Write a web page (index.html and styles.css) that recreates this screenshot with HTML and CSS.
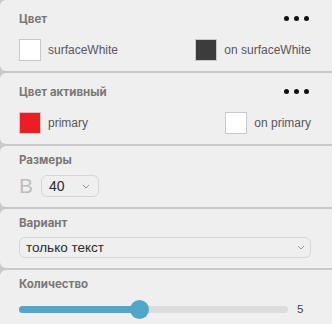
FILE: index.html
```html
<!DOCTYPE html>
<html>
<head>
    <title>Properties</title>
    <link rel="stylesheet" href="styles.css">
</head>
<body>
    <div class="panel">
        <div class="section">
            <div class="head head-menu">
                <span class="title">Цвет</span>
                <span class="dots"><i></i><i></i><i></i></span>
            </div>
            <div class="pair">
                <span class="item"><span class="swatch white"></span><span class="label">surfaceWhite</span></span>
                <span class="item"><span class="swatch dark"></span><span class="label">on surfaceWhite</span></span>
            </div>
        </div>
        <div class="section">
            <div class="head head-menu">
                <span class="title">Цвет активный</span>
                <span class="dots"><i></i><i></i><i></i></span>
            </div>
            <div class="pair">
                <span class="item"><span class="swatch red"></span><span class="label">primary</span></span>
                <span class="item"><span class="swatch white"></span><span class="label">on primary</span></span>
            </div>
        </div>
        <div class="section">
            <div class="head"><span class="title">Размеры</span></div>
            <div class="size-row">
                <span class="big-b">B</span>
                <div class="dropdown small">
                    <span>40</span>
                    <svg class="chev" width="8" height="5" viewBox="0 0 8 5"><path d="M1 1l3 3 3-3" fill="none" stroke="#999" stroke-width="1"/></svg>
                </div>
            </div>
        </div>
        <div class="section">
            <div class="head"><span class="title">Вариант</span></div>
            <div class="dropdown wide">
                <span>только текст</span>
                <svg class="chev" width="8" height="5" viewBox="0 0 8 5"><path d="M1 1l3 3 3-3" fill="none" stroke="#999" stroke-width="1"/></svg>
            </div>
        </div>
        <div class="section last">
            <div class="head"><span class="title">Количество</span></div>
            <div class="slider-row">
                <div class="track">
                    <div class="fill" style="width: 120px;"></div>
                    <div class="thumb" style="left: 111px;"></div>
                </div>
                <span class="value">5</span>
            </div>
        </div>
    </div>
</body>
</html>
```

FILE: styles.css
```css
body
{
    margin: 0;
    background-color: #c9c9c9;
    font-family: "Liberation Sans", Arial, sans-serif;
}
.panel
{
    display: flex;
    flex-direction: column;
    gap: 2px;
    width: 340px;
    height: 324px;
    overflow: hidden;
}
.section
{
    background-color: #efefef;
    border-radius: 6px;
    padding: 7px 29px 10px 19px;
}
.section.last
{
    flex: 1;
}
.head
{
    display: flex;
    align-items: center;
    justify-content: space-between;
    height: 14px;
}
.head-menu
{
    height: 24px;
    margin-bottom: 8px;
}
.title
{
    font-family: Inter, "Liberation Sans", sans-serif;
    font-weight: 700;
    font-size: 11.5px;
    color: #7a7676;
}
.dots
{
    display: flex;
    gap: 5px;
    margin-right: 2px;
    margin-top: -2px;
}
.dots i
{
    width: 5px;
    height: 5px;
    border-radius: 50%;
    background-color: #111;
}
.pair
{
    display: flex;
    justify-content: space-between;
    align-items: center;
    height: 22px;
}
.item
{
    display: flex;
    align-items: center;
}
.swatch
{
    width: 20px;
    height: 20px;
    border: 1px solid #c8c8c8;
    margin-right: 7px;
}
.swatch.white
{
    background-color: #fff;
}
.swatch.dark
{
    background-color: #3c3c3c;
}
.swatch.red
{
    background-color: #ee1c25;
}
.label
{
    font-size: 12px;
    color: #5a5560;
}
.size-row
{
    display: flex;
    align-items: center;
    margin-top: 8px;
}
.big-b
{
    font-size: 21px;
    color: #bdbdbd;
    width: 22px;
    line-height: 22px;
}
.dropdown
{
    display: flex;
    align-items: center;
    justify-content: space-between;
    box-sizing: border-box;
    border: 1px solid #d6d6d6;
    border-radius: 6px;
    color: #2a2a2a;
}
.dropdown.small
{
    width: 58px;
    height: 22px;
    padding: 0 8px 0 7px;
    font-size: 14px;
}
.dropdown.wide
{
    width: 292px;
    height: 21px;
    margin-top: 7px;
    padding: 0 5px 0 6px;
    font-size: 13.5px;
}
.chev
{
    display: block;
}
.slider-row
{
    display: flex;
    align-items: center;
    height: 20px;
    margin-top: 8px;
}
.track
{
    position: relative;
    width: 269px;
    height: 7px;
    border-radius: 4px;
    background-color: #dcdcdc;
}
.fill
{
    height: 7px;
    border-radius: 4px;
    background-color: #4fa8c7;
}
.thumb
{
    position: absolute;
    top: -6px;
    width: 19px;
    height: 19px;
    border-radius: 50%;
    background-color: #4fa8c7;
}
.value
{
    margin-left: 9px;
    font-size: 11.5px;
    color: #444;
}
```
